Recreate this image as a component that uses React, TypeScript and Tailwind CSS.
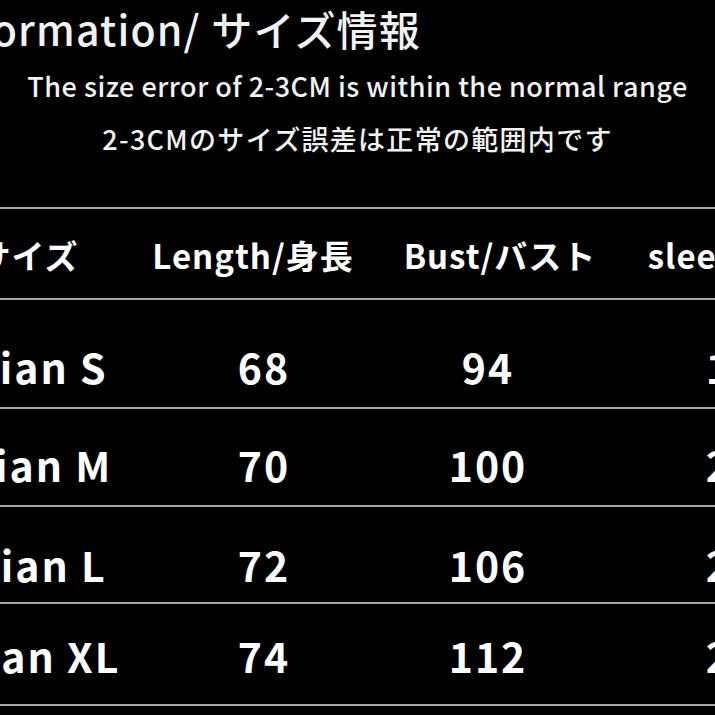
import React from "react";

const font = { fontFamily: '"Noto Sans CJK JP", "Noto Sans", sans-serif' };

type Row = { label: string; len: string; bust: string; sleeve: string; h: string; pt: string };

const rows: Row[] = [
  { label: "Asian S", len: "68", bust: "94", sleeve: "19", h: "h-[107px]", pt: "pt-[26px]" },
  { label: "Asian M", len: "70", bust: "100", sleeve: "20", h: "h-[96px]", pt: "pt-[16px]" },
  { label: "Asian L", len: "72", bust: "106", sleeve: "21", h: "h-[95px]", pt: "pt-[20px]" },
  { label: "Asian XL", len: "74", bust: "112", sleeve: "22", h: "h-[100px]", pt: "pt-[4px]" },
];

function Line() {
  return <div className="h-[2px] w-full bg-[#a6a6a6]" />;
}

export default function App() {
  return (
    <div className="w-[715px] h-[715px] overflow-hidden bg-black text-white" style={font}>
      <div className="h-[58px] w-[421px] flex justify-end items-center whitespace-nowrap text-[41px] tracking-[1.2px] font-medium text-[#f2f2f2]">
        Size Information/ サイズ情報
      </div>
      <div className="h-[56px] flex justify-center items-center whitespace-nowrap text-[27px] tracking-[0.5px] font-medium text-[#f2f2f2]">
        The size error of 2-3CM is within the normal range
      </div>
      <div className="h-[50px] flex justify-center items-center whitespace-nowrap text-[27px] tracking-[1.3px] font-medium text-[#f2f2f2]">
        2-3CMのサイズ誤差は正常の範囲内です
      </div>
      <div className="h-[43px]" />
      <Line />
      <div className="h-[89px] -ml-[90px] w-[1000px] grid grid-cols-[236px_236px_236px_236px] items-center pt-[4px] whitespace-nowrap text-[33px] font-bold tracking-[1px]">
        <div className="text-center">サイズ</div>
        <div className="text-center pr-[22px]">Length/身長</div>
        <div className="text-center">Bust/バスト</div>
        <div className="text-center pl-[14px]">sleeve/袖丈</div>
      </div>
      <Line />
      {rows.map((r) => (
        <React.Fragment key={r.label}>
          <div className={`${r.h} ${r.pt} -ml-[90px] w-[1000px] grid grid-cols-[236px_236px_236px_236px] items-center whitespace-nowrap text-[41px] font-bold tracking-[2px]`}>
            <div className="text-center">{r.label}</div>
            <div className="text-center">{r.len}</div>
            <div className="text-center pr-[24px]">{r.bust}</div>
            <div className="text-center pr-[8px]">{r.sleeve}</div>
          </div>
          <Line />
        </React.Fragment>
      ))}
    </div>
  );
}
